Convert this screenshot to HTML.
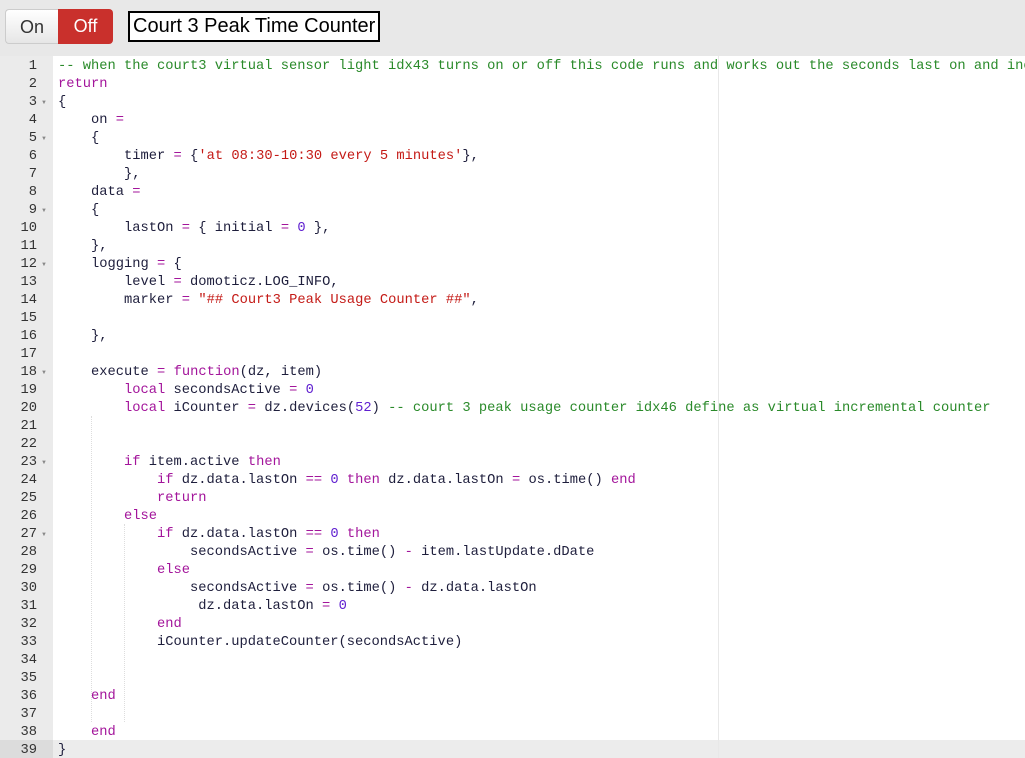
<!DOCTYPE html>
<html><head><meta charset="utf-8"><style>
body{margin:0;width:1025px;height:758px;background:#e8e8e8;overflow:hidden;font-family:"Liberation Sans",sans-serif;position:relative}
.btn{position:absolute;top:9px;height:35px;line-height:35px;font-size:18px;text-align:center}
#on{left:5px;width:53px;background:linear-gradient(#fff,#e6e6e6);border:1px solid #ccc;border-right:none;border-radius:4px 0 0 4px;color:#333;box-sizing:border-box}
#off{left:58px;width:55px;background:#c9302c;color:#fff;border-radius:0 4px 4px 0}
#title{position:absolute;left:128px;top:11px;width:252px;height:31px;border:2px solid #000;box-sizing:border-box;background:#fff;font-size:20px;line-height:27px;padding-left:3px;color:#000}
#ed{position:absolute;left:0;top:56px;width:1025px;height:702px;background:#fff;overflow:hidden}
#gut{position:absolute;left:0;top:0;width:53px;height:702px;background:#ebebeb}
.ln{position:absolute;left:0;width:37px;text-align:right;font:13.75px/18px "Liberation Mono",monospace;color:#333}
.fold{position:absolute;left:41px;font-size:6px;color:#888;line-height:18px}
#code{position:absolute;left:58px;top:2px;font:13.75px/18px "Liberation Mono",monospace;color:#1e1e3c;white-space:pre}
#nums{position:absolute;left:0;top:2px}
#pm{position:absolute;left:718px;top:0;width:1px;height:702px;background:#e8e8e8}
#act{position:absolute;left:0;top:684px;width:1025px;height:18px;background:#ececec}
#actg{position:absolute;left:0;top:684px;width:53px;height:18px;background:#dcdcdc}
.ig{position:absolute;width:0;border-left:1px dotted #ddd}
.c{color:#2a8a2a}.k{color:#a3159b}.s{color:#c41a16}.n{color:#6020d0}
</style></head><body>
<div class="btn" id="on">On</div><div class="btn" id="off">Off</div>
<div id="title">Court 3 Peak Time Counter</div>
<div id="ed">
<div id="gut"></div><div id="act"></div><div id="actg"></div><div id="pm"></div>
<div class="ig" style="left:91px;top:360px;height:306px"></div>
<div class="ig" style="left:124px;top:468px;height:198px"></div>
<div id="nums"></div>
<div id="code"><span class="c">-- when the court3 virtual sensor light idx43 turns on or off this code runs and works out the seconds last on and increments</span>
<span class="k">return</span>
{
    on <span class="k">=</span>
    {
        timer <span class="k">=</span> {<span class="s">'at 08:30-10:30 every 5 minutes'</span>},
        },
    data <span class="k">=</span>
    {
        lastOn <span class="k">=</span> { initial <span class="k">=</span> <span class="n">0</span> },
    },
    logging <span class="k">=</span> {
        level <span class="k">=</span> domoticz.LOG_INFO,
        marker <span class="k">=</span> <span class="s">"## Court3 Peak Usage Counter ##"</span>,

    },

    execute <span class="k">=</span> <span class="k">function</span>(dz, item)
        <span class="k">local</span> secondsActive <span class="k">=</span> <span class="n">0</span>
        <span class="k">local</span> iCounter <span class="k">=</span> dz.devices(<span class="n">52</span>) <span class="c">-- court 3 peak usage counter idx46 define as virtual incremental counter</span>


        <span class="k">if</span> item.active <span class="k">then</span>
            <span class="k">if</span> dz.data.lastOn <span class="k">==</span> <span class="n">0</span> <span class="k">then</span> dz.data.lastOn <span class="k">=</span> os.time() <span class="k">end</span>
            <span class="k">return</span>
        <span class="k">else</span>
            <span class="k">if</span> dz.data.lastOn <span class="k">==</span> <span class="n">0</span> <span class="k">then</span>
                secondsActive <span class="k">=</span> os.time() <span class="k">-</span> item.lastUpdate.dDate
            <span class="k">else</span>
                secondsActive <span class="k">=</span> os.time() <span class="k">-</span> dz.data.lastOn
                 dz.data.lastOn <span class="k">=</span> <span class="n">0</span>
            <span class="k">end</span>
            iCounter.updateCounter(secondsActive)


    <span class="k">end</span>

    <span class="k">end</span>
}</div>
</div>
<script>
var g=document.getElementById('nums'),h='',f=[3,5,9,12,18,23,27];
for(var i=1;i<=39;i++){h+='<div class="ln" style="top:'+((i-1)*18)+'px">'+i+'</div>';if(f.indexOf(i)>=0)h+='<div class="fold" style="top:'+((i-1)*18)+'px">&#9660;</div>';}
g.innerHTML=h;
</script>
</body></html>
